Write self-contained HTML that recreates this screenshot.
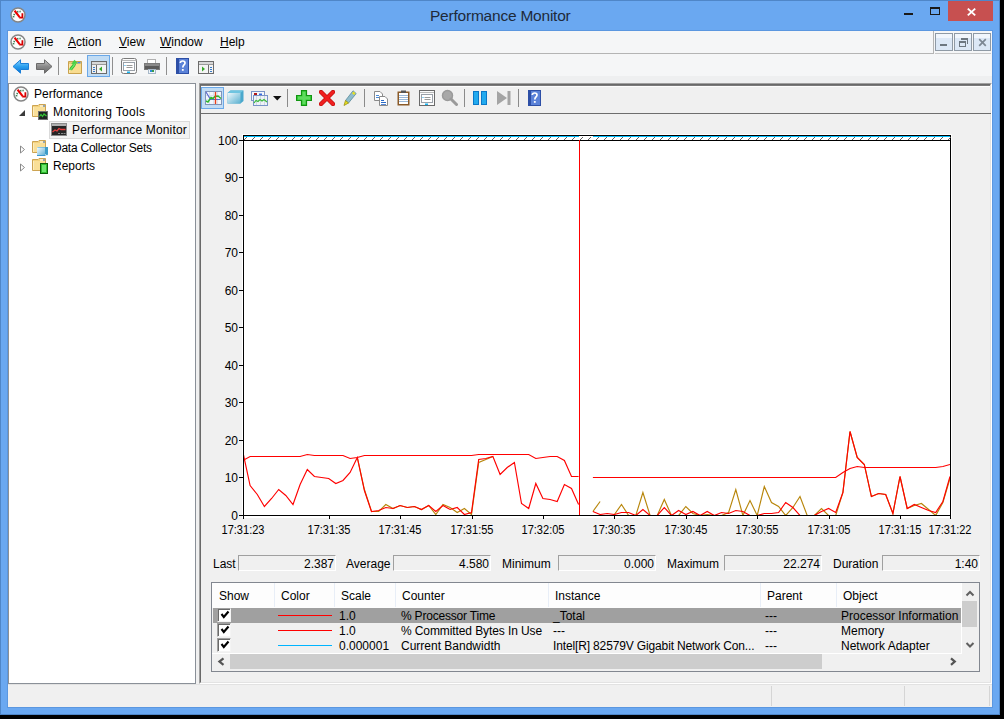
<!DOCTYPE html>
<html><head><meta charset="utf-8">
<style>
*{margin:0;padding:0;box-sizing:border-box}
html,body{width:1004px;height:719px;overflow:hidden;background:#000}
body{position:relative;font-family:"Liberation Sans",sans-serif;font-size:12px;color:#000}
.a{position:absolute}
.t{position:absolute;font-size:12px;line-height:12px;white-space:nowrap}
#win{left:0;top:0;width:1000px;height:715px;background:#6aa8f1;border:1px solid #4f86c8}
.tick{position:absolute;background:#000}
.yl{left:201px;width:37px;text-align:right}
.xl{top:524px;width:60px;text-align:center;transform:scaleX(0.92)}
.ul{text-decoration:underline}
.sep{position:absolute;width:1px;background:#8f8f8f}
.box{position:absolute;height:16px;background:#f0f0f0;border-top:1px solid #a0a0a0;border-left:1px solid #a0a0a0;border-bottom:1px solid #fff;border-right:1px solid #fff}
.box span{position:absolute;right:1px;top:2px;line-height:12px}
.chk{position:absolute;left:217px;width:14px;height:14px;background:#fff;border-top:1px solid #a0a0a0;border-left:1px solid #a0a0a0;border-right:1px solid #f4f4f4;border-bottom:1px solid #f4f4f4;box-shadow:inset 1px 1px 0 #696969}
.hdr{position:absolute;top:583px;height:24px;width:1px;background:#e8eef7}
.mdib{position:absolute;top:33px;width:18px;height:18px;border:1px solid #8f9aa5;background:linear-gradient(#f1f6fc 0,#f1f6fc 25%,#dce8f6 25%,#dce8f6 100%)}
</style></head><body>
<div class="a" id="win"></div>
<!-- title -->
<svg class="a" style="left:10px;top:7px" width="16" height="16" viewBox="0 0 16 16"><circle cx="8" cy="8" r="7" fill="#fdfdfd" stroke="#858585" stroke-width="1.5"/><polyline points="3.50,10.30 3.59,9.29 3.85,8.32 4.28,7.40 4.86,6.57 5.57,5.86 6.40,5.28 7.32,4.85 8.29,4.59 9.30,4.50 10.31,4.59 11.28,4.85" fill="none" stroke="#3f7f55" stroke-width="1.7" stroke-dasharray="1.3 1"/><path d="M4.6 3.6 L9.6 10.2" stroke="#ee0000" stroke-width="2.1"/><path d="M9.2 10.6 H12.4 V6.2" fill="none" stroke="#d80000" stroke-width="1.8"/></svg>
<div class="t" style="left:430px;top:8px;font-size:15.5px;line-height:15px;color:#1e2a3a;letter-spacing:-0.22px">Performance Monitor</div>
<div class="a" style="left:904px;top:13px;width:9px;height:2px;background:#1a1a1a"></div>
<div class="a" style="left:930px;top:7px;width:10px;height:8px;border:1px solid #1a1a1a;border-top-width:2px"></div>
<div class="a" style="left:948px;top:1px;width:45px;height:20px;background:#c75050"></div>
<svg class="a" style="left:966px;top:7px" width="11" height="10" viewBox="0 0 11 10"><path d="M1.8 1.6 L9.2 8.4 M9.2 1.6 L1.8 8.4" stroke="#fff" stroke-width="1.9"/></svg>
<!-- client -->
<div class="a" style="left:7px;top:30px;width:986px;height:678px;background:#5b97e0"></div>
<div class="a" style="left:8px;top:31px;width:984px;height:676px;background:#f0f0f0"></div>
<!-- menubar -->
<div class="a" style="left:8px;top:31px;width:984px;height:23px;background:#f5f6f7"></div>
<div class="a" style="left:8px;top:53px;width:926px;height:1px;background:#b4b4b4"></div>
<div class="a" style="left:933px;top:31px;width:1px;height:23px;background:#b4b4b4"></div>
<div class="a" style="left:935px;top:53px;width:56px;height:1px;background:#c8c8c8"></div>
<svg class="a" style="left:10px;top:34px" width="16" height="16" viewBox="0 0 16 16"><circle cx="8" cy="8" r="7" fill="#fdfdfd" stroke="#858585" stroke-width="1.5"/><polyline points="3.50,10.30 3.59,9.29 3.85,8.32 4.28,7.40 4.86,6.57 5.57,5.86 6.40,5.28 7.32,4.85 8.29,4.59 9.30,4.50 10.31,4.59 11.28,4.85" fill="none" stroke="#3f7f55" stroke-width="1.7" stroke-dasharray="1.3 1"/><path d="M4.6 3.6 L9.6 10.2" stroke="#ee0000" stroke-width="2.1"/><path d="M9.2 10.6 H12.4 V6.2" fill="none" stroke="#d80000" stroke-width="1.8"/></svg>
<div class="t" style="left:34px;top:36px"><span class="ul">F</span>ile</div>
<div class="t" style="left:68px;top:36px"><span class="ul">A</span>ction</div>
<div class="t" style="left:119px;top:36px"><span class="ul">V</span>iew</div>
<div class="t" style="left:160px;top:36px"><span class="ul">W</span>indow</div>
<div class="t" style="left:220px;top:36px"><span class="ul">H</span>elp</div>
<div class="mdib" style="left:935px"></div>
<div class="mdib" style="left:954px"></div>
<div class="mdib" style="left:973px"></div>
<div class="a" style="left:940px;top:44px;width:7px;height:2px;background:#6d7780"></div>
<div class="a" style="left:961px;top:38px;width:7px;height:6px;border:2px solid #6d7780;border-left:none;border-bottom:none;border-right-width:1px"></div>
<div class="a" style="left:959px;top:41px;width:7px;height:6px;border:1px solid #6d7780;border-top-width:2px;background:#dce8f6"></div>
<svg class="a" style="left:978px;top:38px" width="9" height="9" viewBox="0 0 9 9"><path d="M1.2 1.2 L7.8 7.8 M7.8 1.2 L1.2 7.8" stroke="#7d8893" stroke-width="1.7"/></svg>
<!-- toolbar -->
<div class="a" style="left:8px;top:54px;width:984px;height:22px;background:#f5f6f7"></div>
<div class="a" style="left:8px;top:76px;width:984px;height:7px;background:#eeeff0"></div>
<!-- main toolbar icons -->
<svg class="a" style="left:12px;top:59px" width="18" height="15" viewBox="0 0 18 15"><defs><linearGradient id="gb" x1="0" y1="0" x2="0" y2="1"><stop offset="0" stop-color="#8fd3ff"/><stop offset="0.5" stop-color="#2aa0f0"/><stop offset="1" stop-color="#0a6fd0"/></linearGradient></defs><path d="M1 7.5 L8.5 0.8 L8.5 4.5 L16.5 4.5 L16.5 10.5 L8.5 10.5 L8.5 14.2 Z" fill="url(#gb)" stroke="#1b7fd8" stroke-width="1"/></svg>
<svg class="a" style="left:35px;top:59px" width="18" height="15" viewBox="0 0 18 15"><defs><linearGradient id="gg" x1="0" y1="0" x2="0" y2="1"><stop offset="0" stop-color="#c8c8c8"/><stop offset="0.5" stop-color="#8a8a8a"/><stop offset="1" stop-color="#6a6a6a"/></linearGradient></defs><path d="M17 7.5 L9.5 0.8 L9.5 4.5 L1.5 4.5 L1.5 10.5 L9.5 10.5 L9.5 14.2 Z" fill="url(#gg)" stroke="#6a6a6a" stroke-width="1"/></svg>
<div class="sep" style="left:58px;top:57px;height:18px"></div>
<svg class="a" style="left:68px;top:59px" width="15" height="16" viewBox="0 0 15 16"><path d="M0.5 2.5 H13.5 V14.5 H0.5 Z" fill="#eccb76" stroke="#c9a24e"/><rect x="1" y="5" width="12" height="9" fill="#f8dc90"/><rect x="1" y="5" width="1" height="9" fill="#fbe9b4"/><rect x="9.5" y="3" width="3" height="1.4" fill="#4a8ae8"/><path d="M2.6 11 C3.2 8.3 6 7.8 6.6 4.5" fill="none" stroke="#2fb82f" stroke-width="3"/><path d="M2.6 11 C3.2 8.3 6 7.8 6.6 4.5" fill="none" stroke="#66e866" stroke-width="1.4"/><path d="M3.2 5 L6.5 0.8 L10 4.6 Z" fill="#48d048"/></svg>
<div class="a" style="left:87px;top:55px;width:23px;height:22px;background:#c1dcf4;border:1px solid #6aa8e8"></div>
<svg class="a" style="left:91px;top:61px" width="16" height="13" viewBox="0 0 16 13"><rect x="0.5" y="0.5" width="15" height="12" fill="#f4f4f4" stroke="#6c6c6c"/><rect x="1" y="1" width="14" height="2" fill="#d8d8d8"/><line x1="1" y1="3.5" x2="15" y2="3.5" stroke="#9a9a9a"/><rect x="1" y="4" width="4" height="8" fill="#eeeeee"/><line x1="5.5" y1="4" x2="5.5" y2="12" stroke="#6c6c6c"/><rect x="2" y="6" width="2" height="1" fill="#3a7cc8"/><rect x="2" y="8" width="2" height="1" fill="#3a7cc8"/><rect x="2" y="10" width="2" height="1" fill="#3a7cc8"/><path d="M8 8 L11 5.5 L11 10.5 Z" fill="#36a82a"/></svg>
<div class="sep" style="left:112px;top:57px;height:18px"></div>
<svg class="a" style="left:121px;top:58px" width="16" height="16" viewBox="0 0 16 16"><rect x="0.5" y="0.5" width="15" height="15" rx="2" fill="#fbfbfb" stroke="#7a7a7a"/><line x1="1" y1="2.5" x2="15" y2="2.5" stroke="#b8b8b8"/><rect x="2.5" y="4.5" width="11" height="8" fill="#fff" stroke="#9aa0a8"/><rect x="3.5" y="7" width="1" height="1" fill="#19a6f0"/><rect x="5.5" y="7" width="6" height="1" fill="#9a9a9a"/><rect x="5.5" y="9" width="6" height="1" fill="#9a9a9a"/><rect x="6" y="13.5" width="3" height="1.5" fill="#19b4f0"/></svg>
<svg class="a" style="left:144px;top:59px" width="16" height="15" viewBox="0 0 16 15"><rect x="3.5" y="0.5" width="8" height="4" fill="#fff" stroke="#b0b0b0"/><rect x="0.5" y="4.5" width="15" height="6" fill="#5a5a5a" stroke="#7a7a7a"/><rect x="1" y="5" width="14" height="2" fill="#8a8a8a"/><rect x="4.5" y="10.5" width="7" height="4" fill="#f0f4f8" stroke="#a8b8c8"/><rect x="6" y="11" width="3" height="2" fill="#2a8ad8"/><rect x="8" y="11" width="2" height="2" fill="#3a9a4a"/></svg>
<div class="sep" style="left:166px;top:57px;height:18px"></div>
<svg class="a" style="left:176px;top:58px" width="13" height="16" viewBox="0 0 13 16"><rect x="0" y="0" width="13" height="16" fill="#2d4fa6"/><rect x="3" y="1" width="9" height="14" fill="#5b82d8"/><path d="M4.3 5 C4.3 2.3 9 2.3 9 5 C9 7 6.8 7 6.8 9.5" fill="none" stroke="#fff" stroke-width="1.7"/><rect x="5.9" y="11" width="1.8" height="1.8" fill="#fff"/></svg>
<svg class="a" style="left:198px;top:61px" width="16" height="13" viewBox="0 0 16 13"><rect x="0.5" y="0.5" width="15" height="12" fill="#f4f4f4" stroke="#6c6c6c"/><rect x="1" y="1" width="14" height="2" fill="#d8d8d8"/><line x1="1" y1="3.5" x2="15" y2="3.5" stroke="#9a9a9a"/><line x1="10.5" y1="4" x2="10.5" y2="12" stroke="#6c6c6c"/><rect x="12" y="6" width="2" height="1" fill="#3a7cc8"/><rect x="12" y="8" width="2" height="1" fill="#3a7cc8"/><rect x="12" y="10" width="2" height="1" fill="#3a7cc8"/><path d="M7 8 L4 5.5 L4 10.5 Z" fill="#36a82a"/></svg>

<!-- tree -->
<div class="a" style="left:8px;top:83px;width:188px;height:601px;background:#fff;border:1px solid #8a9098"></div>
<!-- tree -->
<svg class="a" style="left:13px;top:86px" width="16" height="16" viewBox="0 0 16 16"><circle cx="8" cy="8" r="7" fill="#fdfdfd" stroke="#858585" stroke-width="1.5"/><polyline points="3.50,10.30 3.59,9.29 3.85,8.32 4.28,7.40 4.86,6.57 5.57,5.86 6.40,5.28 7.32,4.85 8.29,4.59 9.30,4.50 10.31,4.59 11.28,4.85" fill="none" stroke="#3f7f55" stroke-width="1.7" stroke-dasharray="1.3 1"/><path d="M4.6 3.6 L9.6 10.2" stroke="#ee0000" stroke-width="2.1"/><path d="M9.2 10.6 H12.4 V6.2" fill="none" stroke="#d80000" stroke-width="1.8"/></svg>
<div class="t" style="left:34px;top:88px">Performance</div>
<svg class="a" style="left:19px;top:110px" width="7" height="6" viewBox="0 0 7 6"><path d="M6 0 L6 6 L0 6 Z" fill="#3a3a3a"/></svg>
<svg class="a" style="left:32px;top:104px" width="16" height="16" viewBox="0 0 16 16"><path d="M0.5 1.5 H6 L7 0.5 H13.5 V12.5 H0.5 Z" fill="#f3d27e" stroke="#cda453"/><path d="M1 3 H13 V12 H1 Z" fill="#f9df98"/><rect x="1" y="3" width="1" height="9" fill="#fcedc0"/><rect x="8" y="1.5" width="3" height="1" fill="#fff"/><rect x="11" y="1.5" width="2" height="1" fill="#3a7ae0"/><rect x="6.5" y="7.5" width="9" height="8" fill="#1e2622" stroke="#707070"/><path d="M7.5 12.5 L9 10.5 L10.5 12.5 L12 10 L14.5 12" fill="none" stroke="#35c835" stroke-width="1.2"/></svg>
<div class="t" style="left:53px;top:106px;letter-spacing:0.33px">Monitoring Tools</div>
<div class="a" style="left:49px;top:121px;width:141px;height:18px;background:#f3f3f3;border:1px solid #dadada"></div>
<svg class="a" style="left:51px;top:123px" width="16" height="13" viewBox="0 0 16 13"><rect x="0.5" y="0.5" width="15" height="12" fill="#262626" stroke="#8a8a8a"/><rect x="1" y="1" width="14" height="2" fill="#b0b0b0"/><path d="M1.5 9 L4 7 L6 8 L8 5.5 L10 6.5 L14.5 6.5" fill="none" stroke="#e84040" stroke-width="1.3"/><rect x="7" y="10" width="2" height="1" fill="#888"/><rect x="10" y="10" width="2" height="1" fill="#888"/><rect x="12.5" y="10" width="2" height="1" fill="#888"/></svg>
<div class="t" style="left:72px;top:124px;letter-spacing:0.15px">Performance Monitor</div>
<svg class="a" style="left:19px;top:145px" width="7" height="9" viewBox="0 0 7 9"><path d="M1.5 1 L5.5 4.5 L1.5 8 Z" fill="#fff" stroke="#8a8a8a"/></svg>
<svg class="a" style="left:32px;top:140px" width="17" height="17" viewBox="0 0 17 17"><defs><linearGradient id="cu" x1="0" y1="0" x2="1" y2="1"><stop offset="0" stop-color="#f4fbff"/><stop offset="1" stop-color="#5eaed4"/></linearGradient></defs><path d="M0.5 1.5 H6 L7 0.5 H13.5 V12.5 H0.5 Z" fill="#f3d27e" stroke="#cda453"/><path d="M1 3 H13 V12 H1 Z" fill="#f9df98"/><rect x="1" y="3" width="1" height="9" fill="#fcedc0"/><rect x="8" y="1.5" width="3" height="1" fill="#fff"/><rect x="11" y="1.5" width="2" height="1" fill="#3a7ae0"/><path d="M5 7.5 L6 7 H16 V14.5 L15 15.5 Z" fill="#3e9cc8"/><rect x="5" y="7.5" width="8" height="8" fill="url(#cu)"/><path d="M5 15.5 H13 L13.8 15" stroke="#3a98d0" stroke-width="1" fill="none"/></svg>
<div class="t" style="left:53px;top:142px;letter-spacing:-0.24px">Data Collector Sets</div>
<svg class="a" style="left:19px;top:163px" width="7" height="9" viewBox="0 0 7 9"><path d="M1.5 1 L5.5 4.5 L1.5 8 Z" fill="#fff" stroke="#8a8a8a"/></svg>
<svg class="a" style="left:32px;top:158px" width="17" height="17" viewBox="0 0 17 17"><path d="M0.5 1.5 H6 L7 0.5 H13.5 V12.5 H0.5 Z" fill="#f3d27e" stroke="#cda453"/><path d="M1 3 H13 V12 H1 Z" fill="#f9df98"/><rect x="1" y="3" width="1" height="9" fill="#fcedc0"/><rect x="8" y="1.5" width="3" height="1" fill="#fff"/><rect x="11" y="1.5" width="2" height="1" fill="#3a7ae0"/><rect x="8.5" y="5.5" width="7" height="10" fill="#2fbf2f" stroke="#0b5e0b"/><rect x="10" y="7" width="4" height="7" fill="#6ee66e"/></svg>
<div class="t" style="left:53px;top:160px">Reports</div>

<!-- right panel -->
<div class="a" style="left:199px;top:83px;width:793px;height:601px;background:#f0f0f0;border-top:1px solid #a0a0a0;border-left:1px solid #a0a0a0;border-right:1px solid #fff;border-bottom:1px solid #fff"></div>
<div class="a" style="left:200px;top:84px;width:791px;height:599px;border-top:1px solid #696969;border-left:1px solid #696969;border-right:1px solid #e3e3e3;border-bottom:1px solid #e3e3e3"></div>
<div class="a" style="left:201px;top:113px;width:790px;height:1px;background:#6d6d6d"></div>
<!-- perf toolbar -->
<div class="a" style="left:201px;top:85px;width:789px;height:1px;background:#7a7a7a"></div><div class="a" style="left:201px;top:86px;width:789px;height:1px;background:#fdfdfd"></div>
<div class="a" style="left:201px;top:87px;width:23px;height:22px;background:#c1dcf4;border:1px solid #6aa8e8"></div>
<svg class="a" style="left:205px;top:91px" width="17" height="14" viewBox="0 0 17 14"><rect x="0.5" y="0.5" width="16" height="13" fill="#f2f6fb" stroke="#8094b8"/><path d="M4.5 1 V13 M8.5 1 V13 M12.5 1 V13 M1 4.5 H16 M1 8.5 H16" stroke="#d8e2ee" stroke-width="1"/><path d="M1 1 L5.5 8.5 L15.5 8.5" fill="none" stroke="#5a6ad0" stroke-width="1.2"/><path d="M1 10 L3 11 L6 6.5 L8 7.5 L10 5.5 L13 5 L16 7.5" fill="none" stroke="#2eb82e" stroke-width="1.5"/><line x1="10.5" y1="1" x2="10.5" y2="13" stroke="#e8401a" stroke-width="1.4"/></svg>
<svg class="a" style="left:227px;top:90px" width="17" height="14" viewBox="0 0 17 14"><defs><linearGradient id="cb" x1="0" y1="0" x2="1" y2="1"><stop offset="0" stop-color="#eef8fc"/><stop offset="1" stop-color="#5ab0d0"/></linearGradient></defs><path d="M0.5 3 L3.5 0.5 L16.5 0.5 L16.5 11 L13.5 13.5 L0.5 13.5 Z" fill="#4aa8cc"/><path d="M0.5 3 L13.5 3 L13.5 13.5 L0.5 13.5 Z" fill="url(#cb)"/><path d="M0.5 3 L3.5 0.5 L16.5 0.5 L13.5 3 Z" fill="#6ec4e0"/></svg>
<svg class="a" style="left:251px;top:91px" width="17" height="15" viewBox="0 0 17 15"><rect x="0.5" y="0.5" width="13" height="9" fill="#f4f6fa" stroke="#7a94c8"/><rect x="3" y="2" width="3" height="2" fill="#b01818"/><rect x="8" y="2.5" width="3" height="1.5" fill="#3a6ae0"/><rect x="2.5" y="4.5" width="14" height="10" fill="#eef2f7" stroke="#7a94c8"/><path d="M5.5 5 V14 M9.5 5 V14 M13.5 5 V14" stroke="#d0d8e2"/><path d="M3 12 L5 9.5 L7 10.5 L9 8.5 L11 10 L13 8.5 L16 11" fill="none" stroke="#3ab83a" stroke-width="1.2"/></svg>
<svg class="a" style="left:273px;top:96px" width="9" height="5" viewBox="0 0 9 5"><path d="M0 0 L8.5 0 L4.25 4.5 Z" fill="#111"/></svg>
<div class="sep" style="left:287px;top:89px;height:18px;background:#8a8a8a"></div>
<svg class="a" style="left:296px;top:90px" width="16" height="16" viewBox="0 0 16 16"><path d="M5.5 0.5 H10.5 V5.5 H15.5 V10.5 H10.5 V15.5 H5.5 V10.5 H0.5 V5.5 H5.5 Z" fill="#39c939" stroke="#119611" stroke-width="1.2"/><path d="M6.5 2 H9.5 V6.5 H14 V9.5 H9.5 V14 H6.5 V9.5 H2 V6.5 H6.5 Z" fill="#5edc5e"/></svg>
<svg class="a" style="left:319px;top:90px" width="16" height="16" viewBox="0 0 16 16"><path d="M2 2 L14 14 M14 2 L2 14" stroke="#c01010" stroke-width="4.4" stroke-linecap="round"/><path d="M2 2 L14 14 M14 2 L2 14" stroke="#f02020" stroke-width="3" stroke-linecap="round"/></svg>
<svg class="a" style="left:343px;top:90px" width="14" height="16" viewBox="0 0 14 16"><path d="M10 0.8 L13.2 3.5 L5.5 13 L2.5 10.5 Z" fill="#8fbccc" stroke="#5a8a9a" stroke-width="0.8"/><path d="M10.5 1.5 L12.5 3.3 L11 5 L9 3.3 Z" fill="#e8e020"/><path d="M2.5 10.5 L5.5 13 L1 15.5 Z" fill="#e8e020" stroke="#9a9010" stroke-width="0.8"/></svg>
<div class="sep" style="left:364px;top:89px;height:18px;background:#8a8a8a"></div>
<svg class="a" style="left:374px;top:90px" width="15" height="16" viewBox="0 0 15 16"><path d="M0.5 1.5 H6 L8.5 4 V10.5 H0.5 Z" fill="#fff" stroke="#8a8a8a"/><rect x="2" y="5" width="3" height="1" fill="#4a8ad8"/><rect x="2" y="7" width="4" height="1" fill="#4a8ad8"/><path d="M5.5 6.5 H11 L13.5 9 V15.5 H5.5 Z" fill="#fff" stroke="#8a8a8a"/><rect x="7" y="10" width="3" height="1" fill="#2a6ac8"/><rect x="7" y="12" width="5" height="1" fill="#2a6ac8"/><rect x="7" y="14" width="5" height="0.8" fill="#2a6ac8"/></svg>
<svg class="a" style="left:397px;top:90px" width="14" height="16" viewBox="0 0 14 16"><rect x="0.5" y="1.5" width="12" height="14" fill="#8a5a28"/><rect x="2" y="3" width="9" height="11" fill="#fff"/><path d="M2 5.5 H11 M2 7.5 H11 M2 9.5 H11 M2 11.5 H11" stroke="#9ab8d8"/><rect x="4" y="0.5" width="5" height="2.5" fill="#555"/></svg>
<svg class="a" style="left:419px;top:90px" width="16" height="16" viewBox="0 0 16 16"><rect x="0.5" y="0.5" width="15" height="15" fill="#fbfbfb" stroke="#6a6a6a"/><line x1="1" y1="2.5" x2="15" y2="2.5" stroke="#b8b8b8"/><rect x="2.5" y="4.5" width="11" height="8" fill="#fff" stroke="#9aa0a8"/><rect x="3.5" y="7" width="1" height="1" fill="#19a6f0"/><rect x="5.5" y="7" width="6" height="1" fill="#9a9a9a"/><rect x="5.5" y="9" width="6" height="1" fill="#9a9a9a"/><rect x="6" y="13.5" width="3" height="1.5" fill="#19b4f0"/></svg>
<svg class="a" style="left:441px;top:89px" width="17" height="17" viewBox="0 0 17 17"><circle cx="6.5" cy="6.5" r="5" fill="#a8a8a8" stroke="#9a9a9a" stroke-width="1.5"/><path d="M10 10 L15.5 15.5" stroke="#9a9a9a" stroke-width="3" stroke-linecap="round"/></svg>
<div class="sep" style="left:464px;top:89px;height:18px;background:#8a8a8a"></div>
<svg class="a" style="left:473px;top:91px" width="15" height="14" viewBox="0 0 15 14"><rect x="0.5" y="0.5" width="5" height="13" fill="#22aaee" stroke="#0a78c8"/><rect x="8.5" y="0.5" width="5" height="13" fill="#22aaee" stroke="#0a78c8"/></svg>
<svg class="a" style="left:496px;top:91px" width="16" height="14" viewBox="0 0 16 14"><path d="M1 0 L11 7 L1 14 Z" fill="#a4a4a4"/><rect x="11.5" y="0" width="3" height="14" fill="#a4a4a4"/></svg>
<div class="sep" style="left:518px;top:89px;height:18px;background:#8a8a8a"></div>
<svg class="a" style="left:528px;top:90px" width="13" height="16" viewBox="0 0 13 16"><rect x="0" y="0" width="13" height="16" fill="#2d4fa6"/><rect x="3" y="1" width="9" height="14" fill="#5b82d8"/><path d="M4.3 5 C4.3 2.3 9 2.3 9 5 C9 7 6.8 7 6.8 9.5" fill="none" stroke="#fff" stroke-width="1.7"/><rect x="5.9" y="11" width="1.8" height="1.8" fill="#fff"/></svg>

<!-- graph -->
<div class="a" style="left:242px;top:134px;width:710px;height:384px;background:#fff"></div>
<svg class="a" style="left:0;top:0" width="1004" height="719" viewBox="0 0 1004 719">
<defs><clipPath id="pc"><rect x="244" y="136" width="706" height="379"/></clipPath></defs>
<style>.rd{fill:none;stroke:#ff0000;stroke-width:1.15} .ol{fill:none;stroke:#b8860b;stroke-width:1.15}</style>
<rect x="243" y="135" width="707" height="380" fill="none" stroke="#000" stroke-width="1" transform="translate(0.5 0.5)"/>
<line x1="243" y1="140.5" x2="951" y2="140.5" stroke="#000" stroke-width="1"/>
<line x1="244" y1="136.5" x2="579" y2="136.5" stroke="#00c0ff" stroke-width="1"/><line x1="593" y1="136.5" x2="950" y2="136.5" stroke="#00c0ff" stroke-width="1"/>
<path d="M246 137h1v1h-1z M245 138h1v1h-1z M244 139h1v1h-1z M254 137h1v1h-1z M253 138h1v1h-1z M252 139h1v1h-1z M262 137h1v1h-1z M261 138h1v1h-1z M260 139h1v1h-1z M270 137h1v1h-1z M269 138h1v1h-1z M268 139h1v1h-1z M278 137h1v1h-1z M277 138h1v1h-1z M276 139h1v1h-1z M286 137h1v1h-1z M285 138h1v1h-1z M284 139h1v1h-1z M294 137h1v1h-1z M293 138h1v1h-1z M292 139h1v1h-1z M302 137h1v1h-1z M301 138h1v1h-1z M300 139h1v1h-1z M310 137h1v1h-1z M309 138h1v1h-1z M308 139h1v1h-1z M318 137h1v1h-1z M317 138h1v1h-1z M316 139h1v1h-1z M326 137h1v1h-1z M325 138h1v1h-1z M324 139h1v1h-1z M334 137h1v1h-1z M333 138h1v1h-1z M332 139h1v1h-1z M342 137h1v1h-1z M341 138h1v1h-1z M340 139h1v1h-1z M350 137h1v1h-1z M349 138h1v1h-1z M348 139h1v1h-1z M358 137h1v1h-1z M357 138h1v1h-1z M356 139h1v1h-1z M366 137h1v1h-1z M365 138h1v1h-1z M364 139h1v1h-1z M374 137h1v1h-1z M373 138h1v1h-1z M372 139h1v1h-1z M382 137h1v1h-1z M381 138h1v1h-1z M380 139h1v1h-1z M390 137h1v1h-1z M389 138h1v1h-1z M388 139h1v1h-1z M398 137h1v1h-1z M397 138h1v1h-1z M396 139h1v1h-1z M406 137h1v1h-1z M405 138h1v1h-1z M404 139h1v1h-1z M414 137h1v1h-1z M413 138h1v1h-1z M412 139h1v1h-1z M422 137h1v1h-1z M421 138h1v1h-1z M420 139h1v1h-1z M430 137h1v1h-1z M429 138h1v1h-1z M428 139h1v1h-1z M438 137h1v1h-1z M437 138h1v1h-1z M436 139h1v1h-1z M446 137h1v1h-1z M445 138h1v1h-1z M444 139h1v1h-1z M454 137h1v1h-1z M453 138h1v1h-1z M452 139h1v1h-1z M462 137h1v1h-1z M461 138h1v1h-1z M460 139h1v1h-1z M470 137h1v1h-1z M469 138h1v1h-1z M468 139h1v1h-1z M478 137h1v1h-1z M477 138h1v1h-1z M476 139h1v1h-1z M486 137h1v1h-1z M485 138h1v1h-1z M484 139h1v1h-1z M494 137h1v1h-1z M493 138h1v1h-1z M492 139h1v1h-1z M502 137h1v1h-1z M501 138h1v1h-1z M500 139h1v1h-1z M510 137h1v1h-1z M509 138h1v1h-1z M508 139h1v1h-1z M518 137h1v1h-1z M517 138h1v1h-1z M516 139h1v1h-1z M526 137h1v1h-1z M525 138h1v1h-1z M524 139h1v1h-1z M534 137h1v1h-1z M533 138h1v1h-1z M532 139h1v1h-1z M542 137h1v1h-1z M541 138h1v1h-1z M540 139h1v1h-1z M550 137h1v1h-1z M549 138h1v1h-1z M548 139h1v1h-1z M558 137h1v1h-1z M557 138h1v1h-1z M556 139h1v1h-1z M566 137h1v1h-1z M565 138h1v1h-1z M564 139h1v1h-1z M574 137h1v1h-1z M573 138h1v1h-1z M572 139h1v1h-1z M582 137h1v1h-1z M581 138h1v1h-1z M580 139h1v1h-1z M590 137h1v1h-1z M589 138h1v1h-1z M588 139h1v1h-1z M598 137h1v1h-1z M597 138h1v1h-1z M596 139h1v1h-1z M606 137h1v1h-1z M605 138h1v1h-1z M604 139h1v1h-1z M614 137h1v1h-1z M613 138h1v1h-1z M612 139h1v1h-1z M622 137h1v1h-1z M621 138h1v1h-1z M620 139h1v1h-1z M630 137h1v1h-1z M629 138h1v1h-1z M628 139h1v1h-1z M638 137h1v1h-1z M637 138h1v1h-1z M636 139h1v1h-1z M646 137h1v1h-1z M645 138h1v1h-1z M644 139h1v1h-1z M654 137h1v1h-1z M653 138h1v1h-1z M652 139h1v1h-1z M662 137h1v1h-1z M661 138h1v1h-1z M660 139h1v1h-1z M670 137h1v1h-1z M669 138h1v1h-1z M668 139h1v1h-1z M678 137h1v1h-1z M677 138h1v1h-1z M676 139h1v1h-1z M686 137h1v1h-1z M685 138h1v1h-1z M684 139h1v1h-1z M694 137h1v1h-1z M693 138h1v1h-1z M692 139h1v1h-1z M702 137h1v1h-1z M701 138h1v1h-1z M700 139h1v1h-1z M710 137h1v1h-1z M709 138h1v1h-1z M708 139h1v1h-1z M718 137h1v1h-1z M717 138h1v1h-1z M716 139h1v1h-1z M726 137h1v1h-1z M725 138h1v1h-1z M724 139h1v1h-1z M734 137h1v1h-1z M733 138h1v1h-1z M732 139h1v1h-1z M742 137h1v1h-1z M741 138h1v1h-1z M740 139h1v1h-1z M750 137h1v1h-1z M749 138h1v1h-1z M748 139h1v1h-1z M758 137h1v1h-1z M757 138h1v1h-1z M756 139h1v1h-1z M766 137h1v1h-1z M765 138h1v1h-1z M764 139h1v1h-1z M774 137h1v1h-1z M773 138h1v1h-1z M772 139h1v1h-1z M782 137h1v1h-1z M781 138h1v1h-1z M780 139h1v1h-1z M790 137h1v1h-1z M789 138h1v1h-1z M788 139h1v1h-1z M798 137h1v1h-1z M797 138h1v1h-1z M796 139h1v1h-1z M806 137h1v1h-1z M805 138h1v1h-1z M804 139h1v1h-1z M814 137h1v1h-1z M813 138h1v1h-1z M812 139h1v1h-1z M822 137h1v1h-1z M821 138h1v1h-1z M820 139h1v1h-1z M830 137h1v1h-1z M829 138h1v1h-1z M828 139h1v1h-1z M838 137h1v1h-1z M837 138h1v1h-1z M836 139h1v1h-1z M846 137h1v1h-1z M845 138h1v1h-1z M844 139h1v1h-1z M854 137h1v1h-1z M853 138h1v1h-1z M852 139h1v1h-1z M862 137h1v1h-1z M861 138h1v1h-1z M860 139h1v1h-1z M870 137h1v1h-1z M869 138h1v1h-1z M868 139h1v1h-1z M878 137h1v1h-1z M877 138h1v1h-1z M876 139h1v1h-1z M886 137h1v1h-1z M885 138h1v1h-1z M884 139h1v1h-1z M894 137h1v1h-1z M893 138h1v1h-1z M892 139h1v1h-1z M902 137h1v1h-1z M901 138h1v1h-1z M900 139h1v1h-1z M910 137h1v1h-1z M909 138h1v1h-1z M908 139h1v1h-1z M918 137h1v1h-1z M917 138h1v1h-1z M916 139h1v1h-1z M926 137h1v1h-1z M925 138h1v1h-1z M924 139h1v1h-1z M934 137h1v1h-1z M933 138h1v1h-1z M932 139h1v1h-1z M942 137h1v1h-1z M941 138h1v1h-1z M940 139h1v1h-1z M950 137h1v1h-1z M949 138h1v1h-1z M948 139h1v1h-1z" fill="#606060"/>
<g clip-path="url(#pc)"><polyline class="ol" points="357.3,457.5 364.4,489.5 371.5,511.5 378.7,511.5 385.8,504.5 393.0,508.5 400.1,505.5 407.3,507.5 414.4,506.5 421.5,509.5 428.7,505.5 435.8,514.5 443.0,504.5 450.1,507.5 457.2,512.5 464.4,508.5 471.5,514.5 478.7,462.5 485.8,459.5 492.9,456.5"/>
<polyline class="ol" points="592.9,511.5 600.1,501.5"/>
<polyline class="ol" points="614.4,514.5 621.5,504.5 628.6,515.5 635.8,515.5 642.9,492.5 650.1,515.5 657.2,515.5 664.3,499.5 671.5,515.5 678.6,515.5 685.8,506.5 692.9,513.5 700.1,515.5 707.2,514.5 714.3,515.5 721.5,515.5 728.6,512.5 735.8,489.5 742.9,515.5 750.0,500.5 757.2,515.5 764.3,486.5 771.5,502.5 778.6,506.5 785.7,515.5 792.9,507.5 800.0,496.5 807.2,515.5 814.3,515.5 821.5,508.5 828.6,515.5 835.7,515.5 842.9,492.5 850.0,431.5 857.2,457.5 864.3,464.5 871.4,496.5 878.6,493.5 885.7,494.5 892.9,513.5 900.0,476.5 907.2,508.5 914.3,505.5 921.4,503.5 928.6,509.5 935.7,515.5 942.9,502.5 950.0,478.5"/>
<polyline class="rd" points="243.0,460.5 250.1,456.5 257.3,456.5 264.4,456.5 271.6,456.5 278.7,456.5 285.8,456.5 293.0,456.5 300.1,456.5 307.3,454.5 314.4,455.5 321.6,455.5 328.7,455.5 335.8,455.5 343.0,455.5 350.1,458.5 357.3,457.5 364.4,455.5 371.5,455.5 378.7,455.5 385.8,455.5 393.0,455.5 400.1,455.5 407.3,455.5 414.4,455.5 421.5,455.5 428.7,455.5 435.8,455.5 443.0,455.5 450.1,455.5 457.2,455.5 464.4,455.5 471.5,455.5 478.7,454.5 485.8,454.5 492.9,454.5 500.1,454.5 507.2,454.5 514.4,454.5 521.5,454.5 528.7,454.5 535.8,458.5 542.9,457.5 550.1,456.5 557.2,456.5 564.4,460.5 571.5,476.5 578.6,476.5"/>
<polyline class="rd" points="243.0,452.5 250.1,485.5 257.3,494.5 264.4,506.5 271.6,498.5 278.7,489.5 285.8,495.5 293.0,504.5 300.1,484.5 307.3,469.5 314.4,476.5 321.6,477.5 328.7,478.5 335.8,483.5 343.0,480.5 350.1,472.5 357.3,457.5 364.4,490.5 371.5,511.5 378.7,510.5 385.8,507.5 393.0,508.5 400.1,505.5 407.3,507.5 414.4,506.5 421.5,509.5 428.7,505.5 435.8,511.5 443.0,505.5 450.1,509.5 457.2,507.5 464.4,514.5 471.5,512.5 478.7,459.5 485.8,458.5 492.9,456.5 500.1,474.5 507.2,467.5 514.4,462.5 521.5,503.5 528.7,508.5 535.8,483.5 542.9,498.5 550.1,499.5 557.2,501.5 564.4,484.5 571.5,488.5 578.6,504.5"/>
<polyline class="rd" points="592.9,477.5 600.1,477.5 607.2,477.5 614.4,477.5 621.5,477.5 628.6,477.5 635.8,477.5 642.9,477.5 650.1,477.5 657.2,477.5 664.3,477.5 671.5,477.5 678.6,477.5 685.8,477.5 692.9,477.5 700.1,477.5 707.2,477.5 714.3,477.5 721.5,477.5 728.6,477.5 735.8,477.5 742.9,477.5 750.0,477.5 757.2,477.5 764.3,477.5 771.5,477.5 778.6,477.5 785.7,477.5 792.9,477.5 800.0,477.5 807.2,477.5 814.3,477.5 821.5,477.5 828.6,477.5 835.7,477.5 842.9,472.5 850.0,468.5 857.2,466.5 864.3,467.5 871.4,467.5 878.6,467.5 885.7,467.5 892.9,467.5 900.0,467.5 907.2,467.5 914.3,467.5 921.4,467.5 928.6,467.5 935.7,467.5 942.9,466.5 950.0,464.5"/>
<polyline class="rd" points="592.9,511.5 600.1,514.5 607.2,513.5 614.4,514.5 621.5,512.5 628.6,512.5 635.8,515.5 642.9,509.5 650.1,515.5 657.2,515.5 664.3,507.5 671.5,515.5 678.6,510.5 685.8,514.5 692.9,511.5 700.1,515.5 707.2,511.5 714.3,515.5 721.5,512.5 728.6,513.5 735.8,510.5 742.9,511.5 750.0,515.5 757.2,515.5 764.3,513.5 771.5,513.5 778.6,512.5 785.7,502.5 792.9,507.5 800.0,515.5 807.2,515.5 814.3,515.5 821.5,511.5 828.6,508.5 835.7,512.5 842.9,492.5 850.0,431.5 857.2,457.5 864.3,464.5 871.4,496.5 878.6,493.5 885.7,494.5 892.9,513.5 900.0,476.5 907.2,508.5 914.3,504.5 921.4,507.5 928.6,510.5 935.7,512.5 942.9,501.5 950.0,476.5"/></g>
<line x1="579.5" y1="140" x2="579.5" y2="515" stroke="#ff0000" stroke-width="1"/>
</svg>
<div class="tick" style="left:239px;top:140px;width:4px;height:1px"></div>
<div class="tick" style="left:239px;top:515px;width:4px;height:1px"></div>
<div class="t yl" style="top:134.5px">100</div>
<div class="t yl" style="top:172.0px">90</div>
<div class="tick" style="left:239px;top:177px;width:4px;height:1px"></div>
<div class="t yl" style="top:209.5px">80</div>
<div class="tick" style="left:239px;top:215px;width:4px;height:1px"></div>
<div class="t yl" style="top:247.0px">70</div>
<div class="tick" style="left:239px;top:252px;width:4px;height:1px"></div>
<div class="t yl" style="top:284.5px">60</div>
<div class="tick" style="left:239px;top:290px;width:4px;height:1px"></div>
<div class="t yl" style="top:322.0px">50</div>
<div class="tick" style="left:239px;top:327px;width:4px;height:1px"></div>
<div class="t yl" style="top:359.5px">40</div>
<div class="tick" style="left:239px;top:365px;width:4px;height:1px"></div>
<div class="t yl" style="top:397.0px">30</div>
<div class="tick" style="left:239px;top:402px;width:4px;height:1px"></div>
<div class="t yl" style="top:434.5px">20</div>
<div class="tick" style="left:239px;top:440px;width:4px;height:1px"></div>
<div class="t yl" style="top:472.0px">10</div>
<div class="tick" style="left:239px;top:477px;width:4px;height:1px"></div>
<div class="t yl" style="top:509.5px">0</div>

<div class="t xl" style="left:213px">17:31:23</div>
<div class="tick" style="left:243px;top:516px;width:1px;height:3px"></div>
<div class="t xl" style="left:299px">17:31:35</div>
<div class="tick" style="left:329px;top:516px;width:1px;height:3px"></div>
<div class="t xl" style="left:370px">17:31:45</div>
<div class="tick" style="left:400px;top:516px;width:1px;height:3px"></div>
<div class="t xl" style="left:442px">17:31:55</div>
<div class="tick" style="left:472px;top:516px;width:1px;height:3px"></div>
<div class="t xl" style="left:513px">17:32:05</div>
<div class="tick" style="left:543px;top:516px;width:1px;height:3px"></div>
<div class="t xl" style="left:584px">17:30:35</div>
<div class="tick" style="left:614px;top:516px;width:1px;height:3px"></div>
<div class="t xl" style="left:656px">17:30:45</div>
<div class="tick" style="left:686px;top:516px;width:1px;height:3px"></div>
<div class="t xl" style="left:727px">17:30:55</div>
<div class="tick" style="left:757px;top:516px;width:1px;height:3px"></div>
<div class="t xl" style="left:799px">17:31:05</div>
<div class="tick" style="left:829px;top:516px;width:1px;height:3px"></div>
<div class="t xl" style="left:870px">17:31:15</div>
<div class="tick" style="left:900px;top:516px;width:1px;height:3px"></div>
<div class="t xl" style="left:920px">17:31:22</div>
<div class="tick" style="left:950px;top:516px;width:1px;height:3px"></div>

<!-- stats -->
<div class="t" style="left:213px;top:558px">Last</div>
<div class="box" style="left:238px;top:555px;width:98px"><span>2.387</span></div>
<div class="t" style="left:346px;top:558px">Average</div>
<div class="box" style="left:393px;top:555px;width:98px"><span>4.580</span></div>
<div class="t" style="left:502px;top:558px">Minimum</div>
<div class="box" style="left:558px;top:555px;width:98px"><span>0.000</span></div>
<div class="t" style="left:667px;top:558px">Maximum</div>
<div class="box" style="left:724px;top:555px;width:98px"><span>22.274</span></div>
<div class="t" style="left:833px;top:558px">Duration</div>
<div class="box" style="left:882px;top:555px;width:98px"><span>1:40</span></div>
<!-- legend -->
<div class="a" style="left:211px;top:582px;width:769px;height:90px;background:#f0f0f0;border:1px solid #828790"></div>
<div class="a" style="left:212px;top:583px;width:750px;height:25px;background:#fdfdfd"></div>
<div class="hdr" style="left:274px"></div>
<div class="hdr" style="left:334px"></div>
<div class="hdr" style="left:395px"></div>
<div class="hdr" style="left:548px"></div>
<div class="hdr" style="left:760px"></div>
<div class="hdr" style="left:836px"></div>
<div class="t" style="left:219px;top:590px">Show</div>
<div class="t" style="left:281px;top:590px">Color</div>
<div class="t" style="left:341px;top:590px">Scale</div>
<div class="t" style="left:402px;top:590px">Counter</div>
<div class="t" style="left:555px;top:590px">Instance</div>
<div class="t" style="left:767px;top:590px">Parent</div>
<div class="t" style="left:843px;top:590px">Object</div>
<div class="a" style="left:213px;top:608px;width:748px;height:15px;background:#a0a0a0"></div>
<div class="chk" style="top:608px"></div>
<div class="chk" style="top:623px"></div>
<div class="chk" style="top:638px"></div>
<svg class="a" style="left:220px;top:610px" width="10" height="40" viewBox="0 0 10 40"><path d="M1.5 4 L3.8 7 L8.5 1.5 M1.5 19 L3.8 22 L8.5 16.5 M1.5 34 L3.8 37 L8.5 31.5" fill="none" stroke="#000" stroke-width="2.1"/></svg>
<div class="a" style="left:278px;top:615px;width:54px;height:1px;background:#ff0000"></div>
<div class="a" style="left:278px;top:630px;width:54px;height:1px;background:#ff0000"></div>
<div class="a" style="left:278px;top:645px;width:54px;height:1px;background:#00b4ff"></div>
<div class="t" style="left:339px;top:610px">1.0</div>
<div class="t" style="left:339px;top:625px">1.0</div>
<div class="t" style="left:339px;top:640px">0.000001</div>
<div class="t" style="left:401px;top:610px;letter-spacing:-0.2px">% Processor Time</div>
<div class="t" style="left:401px;top:625px;letter-spacing:-0.1px">% Committed Bytes In Use</div>
<div class="t" style="left:401px;top:640px">Current Bandwidth</div>
<div class="t" style="left:553px;top:610px">_Total</div>
<div class="t" style="left:553px;top:625px">---</div>
<div class="t" style="left:553px;top:640px;letter-spacing:-0.14px">Intel[R] 82579V Gigabit Network Con...</div>
<div class="t" style="left:765px;top:610px">---</div>
<div class="t" style="left:765px;top:625px">---</div>
<div class="t" style="left:765px;top:640px">---</div>
<div class="t" style="left:841px;top:610px">Processor Information</div>
<div class="t" style="left:841px;top:625px">Memory</div>
<div class="t" style="left:841px;top:640px">Network Adapter</div>
<!-- v scrollbar -->
<div class="a" style="left:961px;top:583px;width:1px;height:71px;background:#fff"></div>
<div class="a" style="left:962px;top:583px;width:17px;height:70px;background:#f0f0f0"></div>
<div class="a" style="left:962px;top:601px;width:15px;height:26px;background:#cdcdcd"></div>
<svg class="a" style="left:965px;top:588px" width="10" height="62" viewBox="0 0 10 62"><path d="M1.5 7.5 L5 4 L8.5 7.5" fill="none" stroke="#606060" stroke-width="2"/><path d="M1.5 55 L5 58.5 L8.5 55" fill="none" stroke="#606060" stroke-width="2"/></svg>
<!-- h scrollbar -->
<div class="a" style="left:212px;top:653px;width:750px;height:17px;background:#f0f0f0;border-top:1px solid #fff"></div>
<div class="a" style="left:230px;top:654px;width:592px;height:15px;background:#cdcdcd"></div>
<svg class="a" style="left:215px;top:656px" width="10" height="12" viewBox="0 0 10 12"><path d="M8.5 2.3 L4.4 5.6 L8.5 8.9" fill="none" stroke="#555" stroke-width="2.2"/></svg>
<svg class="a" style="left:948px;top:656px" width="10" height="12" viewBox="0 0 10 12"><path d="M3 2.3 L6.8 5.6 L3 8.9" fill="none" stroke="#555" stroke-width="2.2"/></svg>

<!-- status bar -->
<div class="a" style="left:8px;top:684px;width:984px;height:1px;background:#e2e2e2"></div>
<div class="a" style="left:771px;top:686px;width:1px;height:20px;background:#d5d5d5"></div>
<div class="a" style="left:904px;top:686px;width:1px;height:20px;background:#d5d5d5"></div>
<div class="a" style="left:989px;top:686px;width:1px;height:20px;background:#d5d5d5"></div>
</body></html>
